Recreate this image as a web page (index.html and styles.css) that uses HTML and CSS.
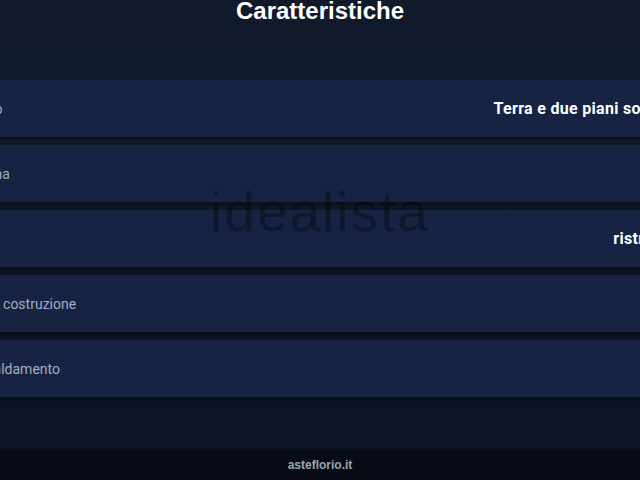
FILE: index.html
```html
<!DOCTYPE html>
<html lang="it">
<head>
<meta charset="utf-8">
<title>Caratteristiche</title>
<link rel="stylesheet" href="styles.css">
</head>
<body>
<main class="page">
  <h2 class="title">Caratteristiche</h2>
  <ul class="specs">
    <li class="spec"><span class="label">Piano</span><span class="value">Terra e due piani sottostanti</span></li>
    <li class="spec"><span class="label">Cucina</span><span class="value">Sì</span></li>
    <li class="spec"><span class="label">Stato</span><span class="value">ristrutturato</span></li>
    <li class="spec"><span class="label">Anno costruzione</span><span class="value">1970</span></li>
    <li class="spec"><span class="label">Riscaldamento</span><span class="value">No</span></li>
  </ul>
  <div class="watermark">idealista</div>
</main>
<footer class="footer">asteflorio.it</footer>
</body>
</html>
```
FILE: styles.css
```css
html, body {
  margin: 0;
  padding: 0;
  width: 640px;
  height: 480px;
  overflow: hidden;
  background: #060b15;
}
body {
  font-family: Roboto, "Liberation Sans", sans-serif;
}
.page {
  position: relative;
  height: 450px;
  background: linear-gradient(180deg, #111a2b 0%, #101828 45%, #0c1322 100%);
}
.title {
  margin: 0;
  font-family: "Liberation Sans", Arial, sans-serif;
  font-weight: 700;
  font-size: 24px;
  line-height: 22px;
  color: #ffffff;
  text-align: center;
}
.specs {
  list-style: none;
  margin: 58px 0 0 -49px;
  padding: 0;
  width: 769px;
  display: flex;
  flex-direction: column;
  gap: 8px;
}
.spec {
  height: 57px;
  box-sizing: border-box;
  padding: 0 16px;
  display: flex;
  align-items: center;
  justify-content: space-between;
  background: #172342;
  box-shadow: 0 2px 4px rgba(0, 0, 0, 0.45);
}
.label {
  font-size: 14px;
  color: #a3adc0;
}
.value {
  font-size: 16px;
  letter-spacing: 0.3px;
  font-weight: 700;
  color: #ffffff;
}
.watermark {
  position: absolute;
  left: 0;
  right: 0;
  top: 180px;
  text-align: center;
  font-family: "Liberation Sans", Arial, sans-serif;
  font-size: 55px;
  letter-spacing: 2px;
  color: rgba(0, 0, 0, 0.33);
  pointer-events: none;
}
.footer {
  height: 30px;
  display: flex;
  align-items: center;
  justify-content: center;
  font-family: "Liberation Sans", Arial, sans-serif;
  font-weight: 700;
  font-size: 12px;
  color: #9ea3ad;
  background: #060b15;
}
```
